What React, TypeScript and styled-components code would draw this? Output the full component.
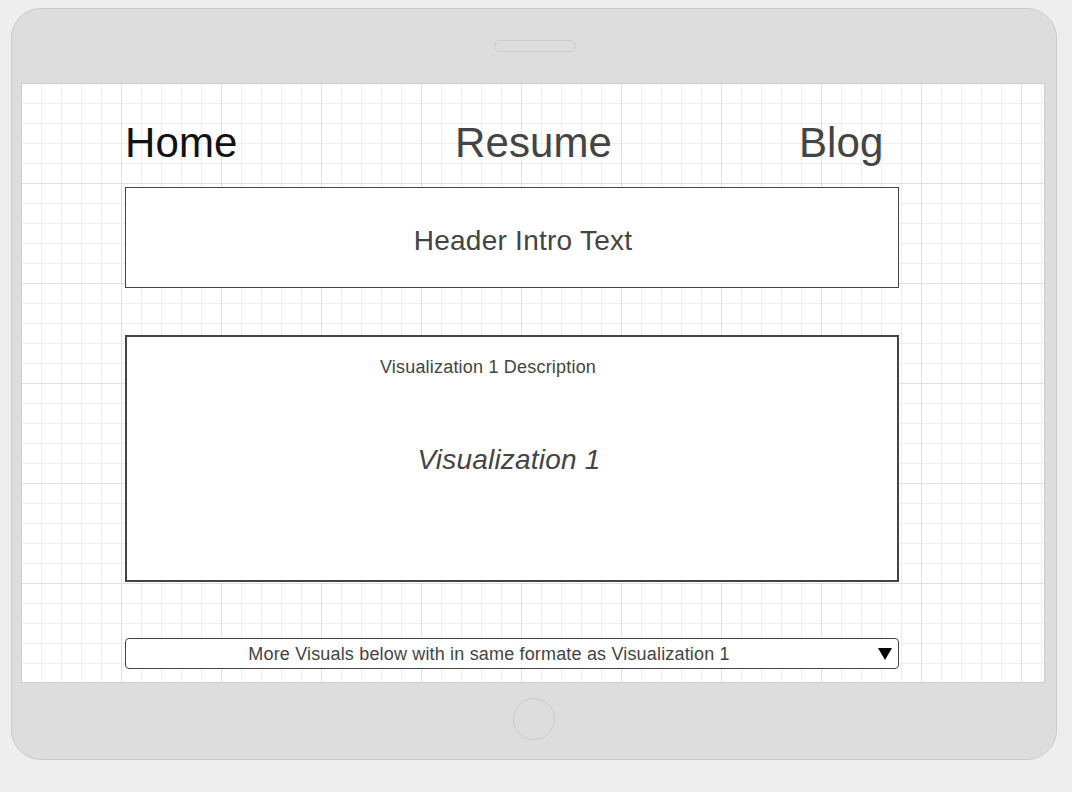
import React from "react";
import styled, { createGlobalStyle } from "styled-components";

const Global = createGlobalStyle`
  html, body { margin: 0; padding: 0; background: #eeeeee; }
  body { font-family: "Liberation Sans", Arial, sans-serif; }
`;

const Page = styled.div`
  padding: 8px 0 0 11px;
  height: 792px;
  box-sizing: border-box;
`;

const Frame = styled.div`
  width: 1046px;
  height: 752px;
  box-sizing: border-box;
  background: #dddddd;
  border: 1px solid #c9c9c9;
  border-radius: 30px;
  display: flex;
  flex-direction: column;
`;

const TopBezel = styled.div`
  height: 74px;
  display: flex;
  align-items: center;
  justify-content: center;
  padding-left: 2px;
  padding-bottom: 1px;
  box-sizing: border-box;
`;

const Speaker = styled.div`
  width: 80px;
  height: 10px;
  border: 1px solid #cacaca;
  border-radius: 6px;
`;

const Screen = styled.div`
  margin-left: 9px;
  width: 1024px;
  height: 600px;
  box-sizing: border-box;
  border: 1px solid #cccccc;
  background-color: #ffffff;
  background-image:
    linear-gradient(to right, #e1e1e1 1px, transparent 1px),
    linear-gradient(to bottom, #e1e1e1 1px, transparent 1px),
    linear-gradient(to right, #eeeeee 1px, transparent 1px),
    linear-gradient(to bottom, #eeeeee 1px, transparent 1px);
  background-size: 100px 100px, 100px 100px, 20px 20px, 20px 20px;
  background-position: -1px -1px;
  padding: 35px 0 0 103px;
  display: flex;
  flex-direction: column;
`;

const Column = styled.div`
  width: 774px;
  display: flex;
  flex-direction: column;
`;

const Nav = styled.nav`
  display: grid;
  grid-template-columns: 330px 344px auto;
  height: 48px;
  align-items: center;
`;

const NavItem = styled.div<{ $active?: boolean }>`
  font-size: 42px;
  line-height: 48px;
  letter-spacing: 0.1px;
  color: ${(p) => (p.$active ? "#111111" : "#444444")};
`;

const HeaderBox = styled.div`
  margin-top: 20px;
  height: 101px;
  box-sizing: border-box;
  border: 1px solid #444444;
  background: #ffffff;
  display: flex;
  align-items: center;
  justify-content: center;
  padding: 6px 0 0 22px;
`;

const HeaderText = styled.div`
  font-size: 28px;
  letter-spacing: 0.25px;
  color: #444444;
`;

const VizBox = styled.div`
  margin-top: 47px;
  height: 247px;
  box-sizing: border-box;
  border: 2px solid #444444;
  background: #ffffff;
  display: flex;
  flex-direction: column;
  align-items: center;
`;

const VizDesc = styled.div`
  margin-top: 19px;
  margin-right: 48px;
  font-size: 18px;
  line-height: 22px;
  letter-spacing: 0.2px;
  color: #444444;
`;

const VizTitle = styled.div`
  margin-top: 66px;
  margin-right: 6px;
  font-size: 28px;
  letter-spacing: 0.2px;
  font-style: italic;
  color: #444444;
`;

const MoreBar = styled.div`
  margin-top: 56px;
  height: 31px;
  box-sizing: border-box;
  border: 1px solid #444444;
  border-radius: 4px;
  background: #ffffff;
  display: flex;
  align-items: center;
  position: relative;
`;

const MoreText = styled.div`
  flex: 1;
  text-align: center;
  padding-right: 46px;
  padding-top: 1px;
  font-size: 18px;
  letter-spacing: 0.17px;
  color: #444444;
`;

const Arrow = styled.div`
  position: absolute;
  right: 5px;
  top: 6px;
  width: 16px;
  height: 16px;
  display: flex;
  align-items: center;
  justify-content: center;
`;

const BottomBezel = styled.div`
  flex: 1;
  display: flex;
  align-items: center;
  justify-content: center;
  padding-bottom: 4px;
`;

const HomeButton = styled.div`
  width: 40px;
  height: 40px;
  border: 1px solid #cacaca;
  border-radius: 50%;
`;

export default function App() {
  return (
    <>
      <Global />
      <Page>
        <Frame>
          <TopBezel>
            <Speaker />
          </TopBezel>
          <Screen>
            <Column>
              <Nav>
                <NavItem $active>Home</NavItem>
                <NavItem>Resume</NavItem>
                <NavItem>Blog</NavItem>
              </Nav>
              <HeaderBox>
                <HeaderText>Header Intro Text</HeaderText>
              </HeaderBox>
              <VizBox>
                <VizDesc>Visualization 1 Description</VizDesc>
                <VizTitle>Visualization 1</VizTitle>
              </VizBox>
              <MoreBar>
                <MoreText>More Visuals below with in same formate as Visualization 1</MoreText>
                <Arrow>
                  <svg width="16" height="16" viewBox="0 0 16 16">
                    <polygon points="1,3 15,3 8,15" fill="#000" />
                  </svg>
                </Arrow>
              </MoreBar>
            </Column>
          </Screen>
          <BottomBezel>
            <HomeButton />
          </BottomBezel>
        </Frame>
      </Page>
    </>
  );
}
